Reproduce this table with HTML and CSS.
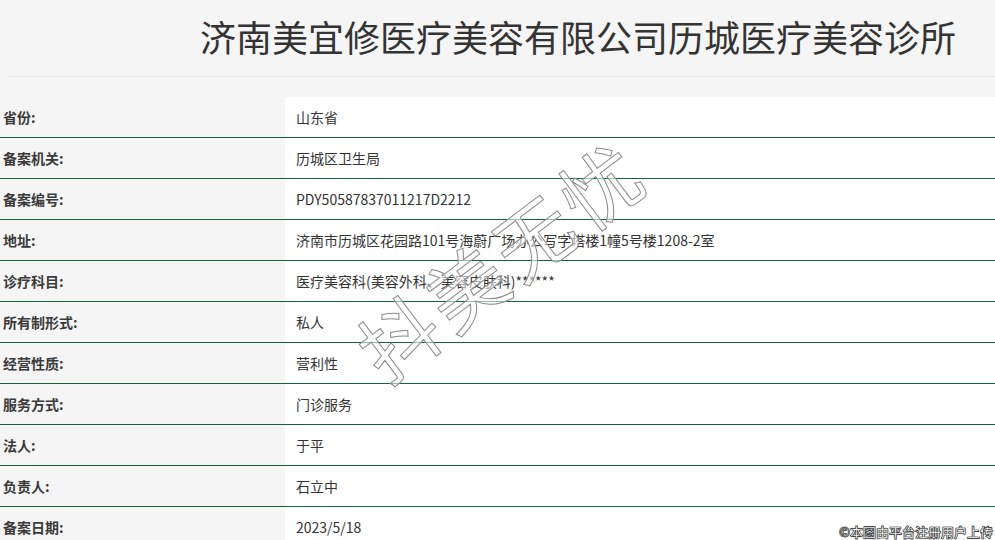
FILE: index.html
```html
<!DOCTYPE html>
<html lang="zh">
<head>
<meta charset="utf-8">
<link rel="stylesheet" href="styles.css">
</head>
<body>
<div class="page">
  <header class="head">
    <h1 class="title">济南美宜修医疗美容有限公司历城医疗美容诊所</h1>
  </header>
  <div class="table">
    <div class="row"><div class="k">省份:</div><div class="v">山东省</div></div>
    <div class="row"><div class="k">备案机关:</div><div class="v">历城区卫生局</div></div>
    <div class="row"><div class="k">备案编号:</div><div class="v">PDY50587837011217D2212</div></div>
    <div class="row"><div class="k">地址:</div><div class="v">济南市历城区花园路101号海蔚广场办公写字塔楼1幢5号楼1208-2室</div></div>
    <div class="row"><div class="k">诊疗科目:</div><div class="v">医疗美容科(美容外科、美容皮肤科)******</div></div>
    <div class="row"><div class="k">所有制形式:</div><div class="v">私人</div></div>
    <div class="row"><div class="k">经营性质:</div><div class="v">营利性</div></div>
    <div class="row"><div class="k">服务方式:</div><div class="v">门诊服务</div></div>
    <div class="row"><div class="k">法人:</div><div class="v">于平</div></div>
    <div class="row"><div class="k">负责人:</div><div class="v">石立中</div></div>
    <div class="row"><div class="k">备案日期:</div><div class="v">2023/5/18</div></div>
  </div>
  <div class="watermark">抖美无忧</div>
  <div class="credit">©本图由平台注册用户上传</div>
</div>
</body>
</html>
```

FILE: styles.css
```css
html, body {
  margin: 0;
  padding: 0;
  background: #f5f5f5;
  overflow: hidden;
}
body {
  font-family: "Noto Sans CJK SC", "Noto Sans", sans-serif;
  color: #333;
}
.page {
  position: relative;
  width: 995px;
  height: 540px;
  overflow: hidden;
}
.head {
  margin-left: 8px;
  height: 76px;
  border-bottom: 1px solid #e6e6e6;
  display: flex;
  align-items: center;
}
.title {
  margin: -4px 0 0 192px;
  font-size: 36px;
  font-weight: 400;
  line-height: 44px;
  color: #333;
  white-space: nowrap;
}
.table {
  margin-top: 20px;
  display: flex;
  flex-direction: column;
}
.row {
  display: flex;
  height: 40px;
  border-bottom: 1px solid #12643a;
}
.k {
  width: 282px;
  padding-left: 3px;
  background: #f5f5f5;
  font-size: 14px;
  font-weight: 700;
  display: flex;
  align-items: center;
  color: #3a3a3a;
}
.v {
  flex: 1;
  background: #fff;
  padding-left: 11px;
  font-size: 14px;
  display: flex;
  align-items: center;
  color: #333;
}
.watermark {
  position: absolute;
  left: 500px;
  top: 258px;
  transform: translate(-50%, -50%) rotate(-37deg);
  font-size: 78px;
  letter-spacing: 6px;
  white-space: nowrap;
  color: rgba(255, 255, 255, 0.55);
  -webkit-text-stroke: 1px #8a8a8a;
  font-family: "Noto Sans CJK SC", sans-serif;
  font-weight: 400;
}
.credit {
  position: absolute;
  right: 2px;
  bottom: 0px;
  font-size: 13px;
  font-weight: 700;
  color: #fff;
  -webkit-text-stroke: 0.6px #333;
  text-shadow: 0 0 1px #000;
  line-height: 16px;
}
```
